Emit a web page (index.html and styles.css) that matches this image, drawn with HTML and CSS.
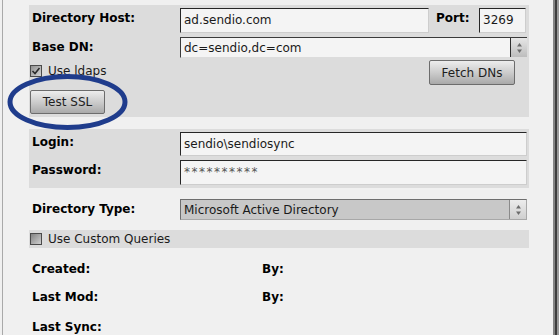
FILE: index.html
```html
<!DOCTYPE html>
<html>
<head>
<meta charset="utf-8">
<link rel="stylesheet" href="styles.css">
</head>
<body>
<div class="window">
  <section class="panel conn">
    <div class="row r-host">
      <span class="lbl">Directory Host:</span>
      <div class="field">
        <div class="input host">ad.sendio.com</div>
        <span class="lbl port-lbl">Port:</span>
        <div class="input port">3269</div>
      </div>
    </div>
    <div class="row r-dn">
      <span class="lbl">Base DN:</span>
      <div class="select light">
        <span class="sel-text">dc=sendio,dc=com</span>
        <span class="spin"><svg width="9" height="14" viewBox="0 0 9 14"><path d="M4.5 2 L7 5.5 L2 5.5 Z" fill="#6c6c6c"/><path d="M4.5 12 L7 8.5 L2 8.5 Z" fill="#6c6c6c"/></svg></span>
      </div>
    </div>
    <div class="row r-ldaps">
      <div class="check">
        <svg class="box" width="12" height="12" viewBox="0 0 12 12"><defs><linearGradient id="gc" x1="0" y1="0" x2="1" y2="1"><stop offset="0" stop-color="#8c8c8c"/><stop offset="1" stop-color="#d8d8d8"/></linearGradient></defs><rect x="0.5" y="0.5" width="11" height="11" fill="url(#gc)" stroke="#4a4a4a"/><path d="M2.5 6 L5 8.5 L9.5 3" fill="none" stroke="#2a2a2a" stroke-width="1.6"/></svg>
        <span class="check-text">Use ldaps</span>
      </div>
      <button class="btn fetch">Fetch DNs</button>
    </div>
    <div class="row r-ssl">
      <button class="btn ssl">Test SSL</button>
    </div>
  </section>

  <section class="panel creds">
    <div class="row r-login">
      <span class="lbl">Login:</span>
      <div class="input wide">sendio\sendiosync</div>
    </div>
    <div class="row r-pass">
      <span class="lbl">Password:</span>
      <div class="input wide pass">**********</div>
    </div>
  </section>

  <div class="row r-type">
    <span class="lbl">Directory Type:</span>
    <div class="select dark">
      <span class="sel-text">Microsoft Active Directory</span>
      <span class="spin"><svg width="9" height="14" viewBox="0 0 9 14"><path d="M4.5 2 L7 5.5 L2 5.5 Z" fill="#6c6c6c"/><path d="M4.5 12 L7 8.5 L2 8.5 Z" fill="#6c6c6c"/></svg></span>
    </div>
  </div>

  <div class="custom-bar">
    <div class="check">
      <svg class="box" width="12" height="12" viewBox="0 0 12 12"><defs><linearGradient id="gu" x1="0" y1="0" x2="1" y2="1"><stop offset="0" stop-color="#7e7e7e"/><stop offset="1" stop-color="#d4d4d4"/></linearGradient></defs><rect x="0.5" y="0.5" width="11" height="11" fill="url(#gu)" stroke="#4a4a4a"/></svg>
      <span class="check-text">Use Custom Queries</span>
    </div>
  </div>

  <div class="meta">
    <div class="meta-row m1"><span class="lbl mlbl">Created:</span><span class="lbl">By:</span></div>
    <div class="meta-row m2"><span class="lbl mlbl">Last Mod:</span><span class="lbl">By:</span></div>
    <div class="meta-row m3"><span class="lbl mlbl">Last Sync:</span></div>
  </div>
</div>

<svg class="annot" width="130" height="70" viewBox="0 0 130 70">
  <ellipse cx="67.5" cy="35" rx="57.5" ry="25.5" fill="none" stroke="#1f3c8c" stroke-width="5"/>
</svg>
</body>
</html>
```

FILE: styles.css
```css
* { box-sizing: border-box; }

html, body {
  margin: 0;
  padding: 0;
  background: #f0f0f0;
}

body {
  font-family: "DejaVu Sans", Verdana, sans-serif;
  font-size: 12px;
  color: #111;
  width: 559px;
  height: 335px;
  overflow: hidden;
  position: relative;
}

.window {
  margin-left: 2px;
  width: 553px;
  height: 335px;
  border-left: 1px solid #a9a9a9;
  border-right: 2px solid #858585;
  box-shadow: 2px 0 0 #3e3e3e, 4px 0 0 #9a9a9a;
  padding: 5px 24px 0 26px;
}

.panel {
  background: #dcdcdc;
  padding: 3px 2px 3px 1px;
}

.row {
  display: flex;
  align-items: flex-start;
}

.lbl {
  font-weight: bold;
  line-height: 14px;
  color: #000;
  white-space: nowrap;
}

.row > .lbl {
  width: 150px;
  padding-left: 2px;
  padding-top: 3px;
  flex: none;
}

.field {
  display: flex;
  align-items: flex-start;
  width: 347px;
}

.input {
  height: 25px;
  background: #f4f4f4;
  border-top: 1px solid #262626;
  border-left: 1px solid #262626;
  border-right: 1px solid #cdcdcd;
  border-bottom: 1px solid #cdcdcd;
  padding-left: 3px;
  line-height: 23px;
  color: #1a1a1a;
  white-space: nowrap;
  overflow: hidden;
}

.input.host { width: 249px; }
.port-lbl { margin-left: 7px; padding-top: 3px; }
.input.port { width: 47px; margin-left: auto; margin-right: 1px; }
.input.wide { width: 347px; }
.input.pass { letter-spacing: 1.5px; color: #555; }

.r-host { height: 25px; }
.r-dn { height: 21px; margin-top: 4px; }
.r-ldaps { height: 25px; margin-top: 2px; }
.r-ssl { height: 24px; margin-top: 5px; }

.select {
  width: 347px;
  height: 21px;
  display: flex;
  align-items: center;
  border-top: 1px solid #3a3a3a;
  border-left: 1px solid #3a3a3a;
  padding-left: 3px;
  color: #1a1a1a;
}

.select.light {
  background: #f4f4f4;
  border-bottom: 1px solid #dcdcdc;
}

.select.dark {
  background: #c8c8c8;
  border-top-color: #6e6e6e;
  border-left-color: #6e6e6e;
  border-bottom: 1px solid #a8a8a8;
  border-right: 1px solid #a8a8a8;
}

.sel-text { flex: 1; white-space: nowrap; }

.spin {
  width: 17px;
  height: 19px;
  display: flex;
  align-items: center;
  justify-content: center;
  background: linear-gradient(#e6e6e6, #bdbdbd);
  border-left: 1px solid #2e2e2e;
}

.select.dark .spin {
  background: linear-gradient(#ececec, #cfcfcf);
  border-left: 1px solid #8a8a8a;
}

.check {
  display: flex;
  align-items: center;
  height: 14px;
}

.check .box { flex: none; display: block; }

.check-text {
  margin-left: 6px;
  line-height: 14px;
  color: #1a1a1a;
}

.r-ldaps .check { margin-top: 4px; }

.btn {
  font-family: "DejaVu Sans", Verdana, sans-serif;
  font-size: 12px;
  color: #1e1e1e;
  border: 1px solid #6c6c6c;
  border-radius: 2px;
  background: linear-gradient(#ededed, #c9c9c9 55%, #a9a9a9);
  padding: 0;
  margin: 0;
}

.btn.fetch {
  width: 86px;
  height: 25px;
  margin-left: auto;
  margin-right: 12px;
}

.btn.ssl {
  width: 75px;
  height: 24px;
}

.creds { margin-top: 12px; }
.r-login { height: 24px; }
.r-login .input { height: 24px; line-height: 22px; }
.r-pass { height: 25px; margin-top: 4px; }

.r-type {
  margin-top: 11px;
  padding-left: 1px;
  height: 21px;
}

.custom-bar {
  margin-top: 10px;
  height: 18px;
  background: #dcdcdc;
  padding-left: 1px;
  display: flex;
  align-items: center;
}

.meta {
  padding-left: 3px;
  padding-top: 14px;
}

.meta-row {
  display: flex;
  height: 14px;
}

.m2 { margin-top: 14px; }
.m3 { margin-top: 16px; }

.mlbl { width: 230px; }

.annot {
  position: absolute;
  left: 0;
  top: 67px;
  pointer-events: none;
}
```
